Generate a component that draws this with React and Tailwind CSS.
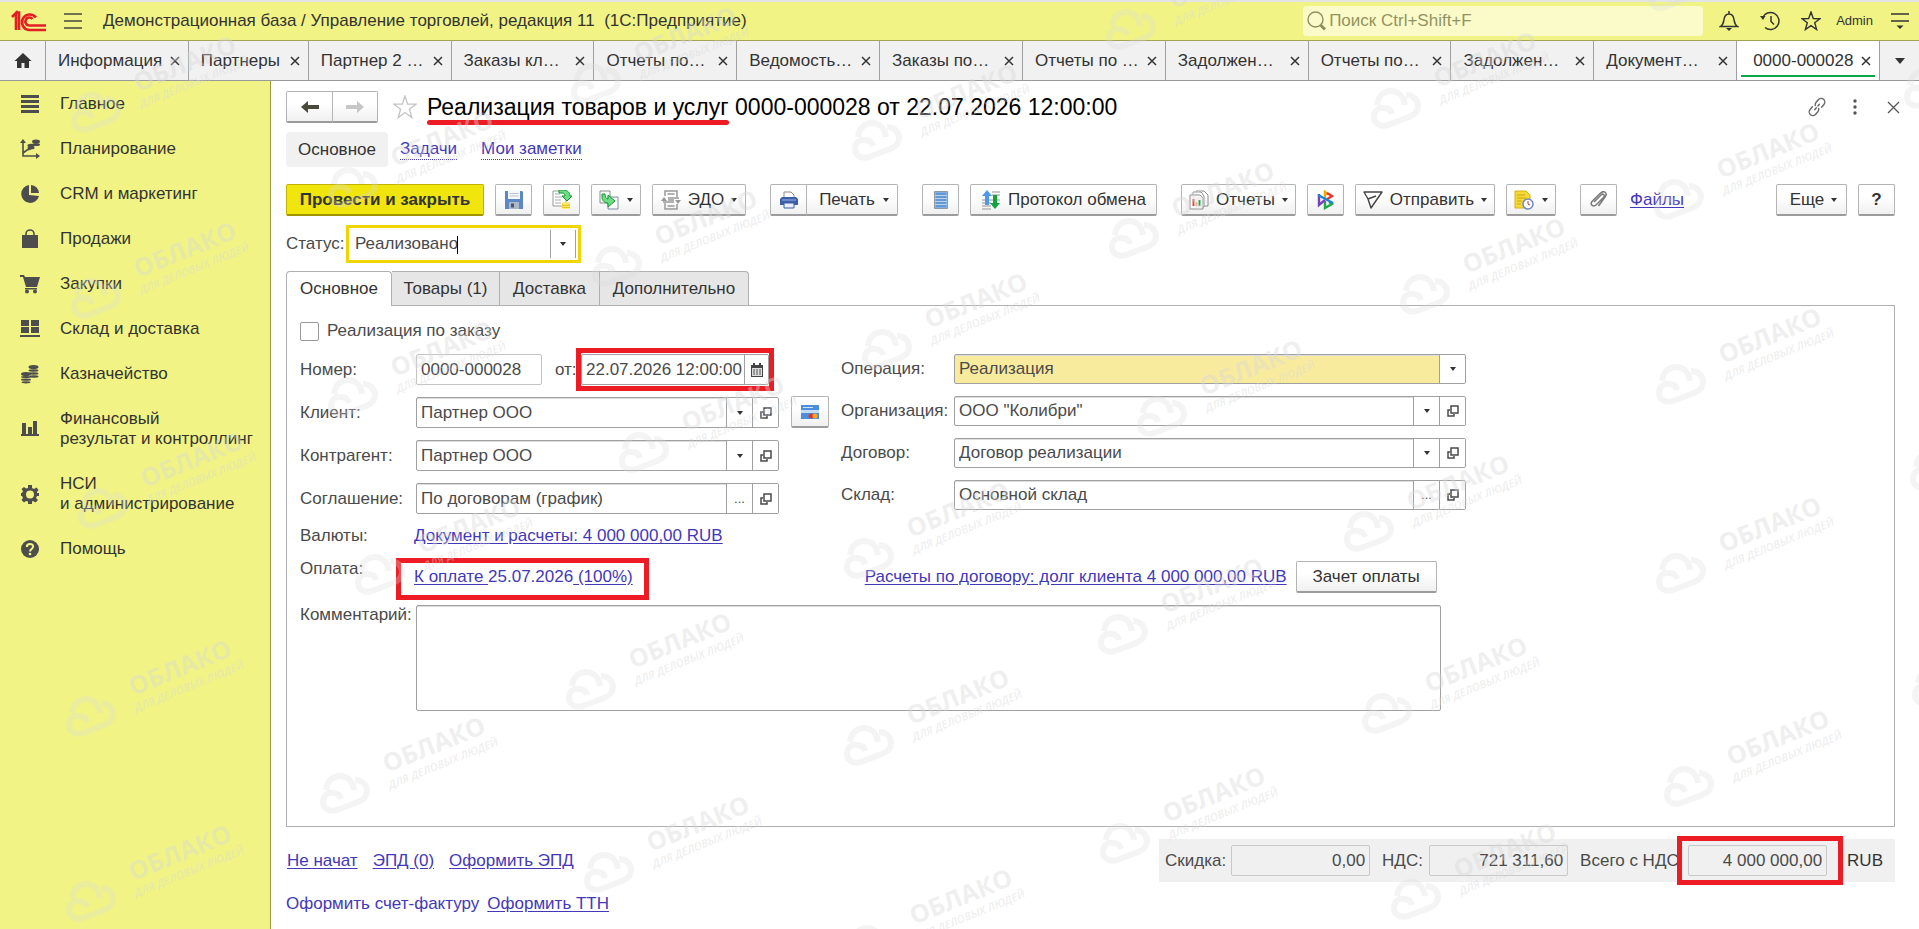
import React from 'react';
import clsx from 'clsx';

const NAV = [
  { icon: 'main', lines: ['Главное'] },
  { icon: 'plan', lines: ['Планирование'] },
  { icon: 'crm', lines: ['CRM и маркетинг'] },
  { icon: 'sales', lines: ['Продажи'] },
  { icon: 'cart', lines: ['Закупки'] },
  { icon: 'stock', lines: ['Склад и доставка'] },
  { icon: 'coins', lines: ['Казначейство'] },
  { icon: 'chart', lines: ['Финансовый', 'результат и контроллинг'] },
  { icon: 'gear', lines: ['НСИ', 'и администрирование'] },
  { icon: 'help', lines: ['Помощь'] },
];

const TABS = [
  'Информация',
  'Партнеры',
  'Партнер 2 …',
  'Заказы кл…',
  'Отчеты по…',
  'Ведомость…',
  'Заказы по…',
  'Отчеты по …',
  'Задолжен…',
  'Отчеты по…',
  'Задолжен…',
  'Документ…',
  '0000-000028',
];

// free-floating stamps over the whole window: [left, top] of each cloud
const STAMPS = [
  [71, 92], [71, 278], [78, 488], [66, 696], [66, 881],
  [328, 167], [328, 377], [355, 554], [320, 773],
  [571, 63], [592, 246], [619, 432], [566, 669], [584, 852],
  [852, 120], [862, 329], [844, 538], [844, 725], [847, 925],
  [1106, 9], [1109, 218], [1137, 396], [1098, 614], [1100, 823],
  [1371, 88], [1400, 274], [1344, 511], [1362, 693], [1391, 879],
  [1648, -30], [1654, 179], [1656, 364], [1656, 553], [1664, 766],
  [1904, 68], [1910, 450], [1912, 666],
];

function Stamps() {
  return (
    <div className="absolute inset-0 overflow-hidden pointer-events-none" aria-hidden="true">
      {STAMPS.map(([left, top]) => (
        <svg key={`${left}-${top}`} className="absolute overflow-visible" style={{ left, top }} width="52" height="44" viewBox="0 0 52 44">
          <g fill="none" stroke="#dcdcdc" strokeOpacity="0.3" strokeWidth="6">
            <path d="M6 17C7 7 14 3 20 3c8 0 13 6 14 14" />
            <path d="M35 7c7 0 12 5 12 11 0 6-4 9-9 11L17 37C10 39 3 36 3 29c0-7 5-10 10-9 4 0 7 2 8 6" />
          </g>
          <g fill="#d8d8d8" fillOpacity="0.42" fontFamily="'Open Sans', sans-serif">
            <text transform="translate(67 0) rotate(-22)" fontSize="25" fontWeight="700">ОБЛАКО</text>
            <text transform="translate(70 16) rotate(-22)" fontSize="11" fontWeight="600" fontStyle="italic">ДЛЯ ДЕЛОВЫХ ЛЮДЕЙ</text>
          </g>
        </svg>
      ))}
    </div>
  );
}

const navIcons = {
  main: <path d="M1 1h18v3H1zM1 6h18v3H1zM1 11h18v3H1zM1 16h18v3H1z" />,
  plan: (
    <>
      <path d="M3 4v13h13M3 14l4-3 3-1 3-4" fill="none" stroke="currentColor" strokeWidth="1.6" />
      <path d="M3 0l3 4H0zM20 17l-4 3v-6z" />
      <ellipse cx="16" cy="2.5" rx="4" ry="2" />
      <ellipse cx="16" cy="5.5" rx="4" ry="1.6" />
      <ellipse cx="11" cy="6.5" rx="3.6" ry="1.8" />
      <ellipse cx="11" cy="9" rx="3.6" ry="1.4" />
    </>
  ),
  crm: (
    <>
      <path d="M9 1a9 9 0 1 0 10 11l-10-1z" />
      <path d="M11 1v8h8a8.500 8.500 0 0 0-8-8z" />
    </>
  ),
  sales: (
    <>
      <path d="M2 6h16v13H2z" />
      <path d="M6 10V5a4 4 0 0 1 8 0v5" fill="none" stroke="currentColor" strokeWidth="1.600" />
    </>
  ),
  cart: (
    <>
      <path d="M0 1h4l1 2h15l-3 10H6L3 3H0z" />
      <path d="M5 14h12v1.500H5z" />
      <circle cx="7" cy="17.500" r="2" />
      <circle cx="15" cy="17.500" r="2" />
    </>
  ),
  stock: <path d="M1 1h8v6H1zM11 1h8v6h-8zM1 8h8v6H1zM11 8h8v6h-8zM0 16h20v2H0z" />,
  coins: (
    <>
      <ellipse cx="13.500" cy="3" rx="5" ry="2" />
      <ellipse cx="13.500" cy="6.500" rx="5" ry="1.200" />
      <ellipse cx="13.500" cy="9.500" rx="5" ry="1.200" />
      <ellipse cx="14" cy="12.500" rx="4.500" ry="1.200" />
      <ellipse cx="6" cy="10" rx="5" ry="2" />
      <ellipse cx="6" cy="13" rx="5" ry="1.100" />
      <ellipse cx="6" cy="15.700" rx="5" ry="1.100" />
      <ellipse cx="6" cy="18.300" rx="4.500" ry="1.100" />
    </>
  ),
  chart: <path d="M1 15h18v2H1zM2 4h4v11H2zM8 8h4v7H8zM13 2h4v13h-4z" />,
  gear: (
    <path
      fillRule="evenodd"
      d="M8 1h4v3l2 1 2.500-1.500 2 2.500L17 8v1h2v3h-2l-1 2 2 2-2.500 2.500L13 17l-1 .5V20H8v-2.500L6 17l-2 1.500L1.500 16 3 14l-1-2H1V9h1l1-2-1.500-2L4 3l2 1.500L8 4zM10 6.500a4 4 0 1 0 0 8 4 4 0 0 0 0-8z"
    />
  ),
  help: (
    <>
      <circle cx="10" cy="10" r="9" />
      <path d="M6.800 8c0-4 6.400-4 6.400-.4 0 2.400-3.200 2.200-3.200 5" fill="none" stroke="#f1f484" strokeWidth="2" />
      <circle cx="10" cy="15" r="1.300" fill="#f1f484" />
    </>
  ),
};

function Logo() {
  return (
    <svg width="36" height="22" viewBox="0 0 36 22" fill="none" stroke="#e31e24" strokeWidth="2.600">
      <path d="M1 7l4-4v17M4.500 2.500H8V20" />
      <path d="M25 7.500A7.800 7.800 0 1 0 18 20h17" />
      <path d="M21.500 9A4 4 0 1 0 18 15.500h17" />
    </svg>
  );
}

function CloseIcon() {
  return (
    <svg width="10" height="10" viewBox="0 0 10 10" fill="none" stroke="#333" strokeWidth="1.500">
      <path d="M1 1l8 8M9 1L1 9" />
    </svg>
  );
}

function Caret({ className }) {
  return (
    <svg className={className} width="6" height="4" viewBox="0 0 6 4" fill="#333">
      <path d="M0 0h6L3 4z" />
    </svg>
  );
}

function OpenIcon() {
  return (
    <svg width="12" height="12" viewBox="0 0 12 12" fill="none" stroke="#4a4a4a" strokeWidth="1.500">
      <path d="M4 1h7v7H4z" />
      <path d="M3 5H1v6h6V9" />
    </svg>
  );
}

function Header() {
  return (
    <header className="flex items-center h-[41px] border-t-2 border-b border-t-[#e4e4e4] border-b-[#a3a456] bg-[#f1f484] pl-[11px] pr-[10px] text-[#333]">
      <Logo />
      <button className="ml-[17px]" aria-label="Меню">
        <svg width="18" height="16" viewBox="0 0 18 16" stroke="#444" strokeWidth="1.500">
          <path d="M0 1h18M0 8h18M0 15h18" />
        </svg>
      </button>
      <span className="ml-[21px] whitespace-pre">Демонстрационная база / Управление торговлей, редакция 11  (1С:Предприятие)</span>
      <label className="ml-auto flex items-center w-[400px] h-[30px] rounded-sm bg-[#fafbc9] pl-1">
        <svg width="20" height="20" viewBox="0 0 20 20" fill="none" stroke="#8f8f5e" strokeWidth="1.400">
          <circle cx="8.500" cy="8.500" r="7.500" />
          <path d="M13.500 14l4.500 4.500" strokeWidth="3" />
        </svg>
        <input className="ml-[2px] flex-1 bg-transparent outline-none placeholder:text-[#93935f]" aria-label="Поиск" placeholder="Поиск Ctrl+Shift+F" />
      </label>
      <button className="ml-4" aria-label="Уведомления">
        <svg width="20" height="20" viewBox="0 0 20 20" fill="none" stroke="#333" strokeWidth="1.500">
          <path d="M1.500 15.500c3-2 3-4 3.500-7C5.500 5 7 3 10 3s4.500 2 5 5.500c.5 3 .5 5 3.500 7zM10 0v3" />
          <path d="M7 17h6l-3 3z" fill="#333" stroke="none" />
        </svg>
      </button>
      <button className="ml-[21px]" aria-label="История">
        <svg width="20" height="20" viewBox="0 0 20 20" fill="none" stroke="#333" strokeWidth="1.500">
          <path d="M2.500 7A8.500 8.500 0 1 1 5 16.500M11 5v5.500l3 3" />
          <path d="M0 5l5.500 0-2.500 4z" fill="#333" stroke="none" />
        </svg>
      </button>
      <button className="ml-[21px]" aria-label="Избранное">
        <svg width="20" height="20" viewBox="0 0 20 20" fill="none" stroke="#333" strokeWidth="1.400">
          <path d="M10 1l2.300 6.500 6.700.2-5.300 4.100 1.900 6.700L10 14.600l-5.600 3.900 1.900-6.700L1 7.700l6.700-.2z" />
        </svg>
      </button>
      <button className="ml-[15px] text-[13px]">Admin</button>
      <button className="ml-[18px]" aria-label="Настройки">
        <svg width="18" height="18" viewBox="0 0 18 18" stroke="#333" strokeWidth="1.500">
          <path d="M0 2h18M0 9h18" />
          <path d="M5.500 13.500h7L9 17z" fill="#333" stroke="none" />
        </svg>
      </button>
    </header>
  );
}

function TabBar() {
  return (
    <nav className="flex h-10 border-b border-[#999] bg-[#f1f1f1] text-[#333]">
      <button className="flex w-[45px] shrink-0 items-center justify-center" aria-label="Начальная страница">
        <svg width="18" height="17" viewBox="0 0 18 17" fill="#333">
          <path d="M9 1l8.500 8H15v7h-4.500v-5h-3v5H3V9H.5z" />
        </svg>
      </button>
      {TABS.map((tab, i) => {
        const active = i === TABS.length - 1;
        return (
          <div
            key={i}
            className={clsx(
              'relative flex items-center justify-between border-l border-[#a0a0a0] pr-2 min-w-0',
              i === 1 ? 'flex-[1_1_120px]' : 'flex-[1_1_143px]',
              active ? 'bg-white pl-4' : 'pl-3',
            )}
          >
            <button className="whitespace-nowrap">{tab}</button>
            <button aria-label="Закрыть"><CloseIcon /></button>
            {active && <span className="absolute bottom-[3px] left-1 right-1 h-[2px] bg-[#0ca64a]" />}
          </div>
        );
      })}
      <button className="flex w-10 shrink-0 items-center justify-center border-l border-[#a0a0a0]" aria-label="Все вкладки">
        <svg width="10" height="6" viewBox="0 0 10 6" fill="#333"><path d="M0 0h10L5 6z" /></svg>
      </button>
    </nav>
  );
}

function Sidebar() {
  return (
    <aside className="w-[271px] shrink-0 border-r border-[#9a9b45] bg-[#f1f484] text-[#333]">
      {NAV.map((item) => (
        <a key={item.icon} href="#" className={clsx('flex items-center pl-5 leading-5', item.lines.length > 1 ? 'h-[65px]' : 'h-[45px]')}>
          <svg className="text-[#4d4d4d]" width="20" height="20" viewBox="0 0 20 20" fill="currentColor">{navIcons[item.icon]}</svg>
          <span className="ml-5">
            {item.lines.map((line) => (
              <span key={line} className="block whitespace-nowrap">{line}</span>
            ))}
          </span>
        </a>
      ))}
    </aside>
  );
}

const BTN = 'flex items-center justify-center h-8 shrink-0 whitespace-nowrap rounded-xs border border-[#b4b4b4] border-b-2 border-b-[#9c9c9c] bg-linear-to-b from-white from-40% to-[#f0f0f0] text-[#333]';

function Toolbar() {
  return (
    <div className="mt-[17px] flex">
      <button className="h-8 w-[198px] shrink-0 whitespace-nowrap rounded-xs border border-[#c0b400] border-b-2 border-b-[#a09700] bg-[#f0e50c] font-bold text-[#333]">Провести и закрыть</button>
      <button className={clsx(BTN, 'ml-[11px] w-[37px]')} aria-label="Записать">
        <svg width="18" height="18" viewBox="0 0 18 18">
          <path d="M0 0h17l1 1v17H0z" fill="#5d87c4" />
          <path d="M3 0h12v8H3z" fill="#f4f8fd" />
          <path d="M4.500 2h9v1h-9zM4.500 4.500h9v1h-9z" fill="#b7c4d8" />
          <path d="M4 11h10v7H4z" fill="#aeb7c4" />
          <path d="M6 12.500h3v4H6z" fill="#46587a" />
        </svg>
      </button>
      <button className={clsx(BTN, 'ml-[11px] w-[37px]')} aria-label="Провести">
        <svg width="20" height="20" viewBox="0 0 20 20">
          <path d="M1 1h13v15H1z" fill="#fff" stroke="#999" />
          <path d="M3 4h5M3 7h7M3 10h6M3 13h6" stroke="#aaa" />
          <path d="M7 0h4c5 0 7 3 7 6h2l-5 5-5-5h3c0-2-1-3-3-3H7z" fill="#6fdc83" stroke="#0f9a34" />
          <path d="M10 13h8v6h-8z" fill="#e9c21e" />
          <ellipse cx="14" cy="13.500" rx="4" ry="1.500" fill="#ffe766" />
          <path d="M10 16.500h8M10 18.500h8" stroke="#fff06e" />
        </svg>
      </button>
      <button className={clsx(BTN, 'ml-[11px] w-[50px]')} aria-label="Создать на основании">
        <svg width="20" height="20" viewBox="0 0 20 20">
          <path d="M1 1h10v12H1z" fill="#fff" stroke="#8a8a8a" />
          <path d="M9 7h10v12H9z" fill="#fff" stroke="#7d8ba0" />
          <path d="M3 4v3c0 4 3 6 6 6v4l7-6-7-6v4C7 9 6 7 6 4z" fill="#6fdc83" stroke="#0f9a34" />
        </svg>
        <Caret className="ml-2" />
      </button>
      <button className={clsx(BTN, 'ml-[11px] w-[94px]')}>
        <svg width="20" height="20" viewBox="0 0 20 20" fill="none" stroke="#999" strokeWidth="1.500">
          <path d="M4 6V1h12v6M4 13v6h12v-5M6.500 4h7M6.500 16h7M7 8h11M2 12h11" />
          <path d="M7 10h6" />
          <path d="M0 11l3-4 3 4zM14 10h6l-3 4z" fill="#999" stroke="none" />
        </svg>
        <span className="ml-[7px]">ЭДО</span>
        <Caret className="ml-[7px]" />
      </button>
      <div className="ml-6 flex">
        <button className={clsx(BTN, 'w-[37px] rounded-r-none')} aria-label="Печать">
          <svg width="18" height="18" viewBox="0 0 18 18">
            <path d="M4 7V1h7l3 3v3z" fill="#fff" stroke="#8a8a8a" />
            <path d="M2 6h14l2 2v6H0V8z" fill="#3d5fa8" />
            <path d="M2 9h14" stroke="#9db8e8" />
            <path d="M4 12h10v5H4z" fill="#e8eefa" stroke="#3d5fa8" />
          </svg>
        </button>
        <button className={clsx(BTN, '-ml-px w-[92px] rounded-l-none pl-1')}>
          Печать
          <Caret className="ml-2" />
        </button>
      </div>
      <button className={clsx(BTN, 'ml-6 w-[37px]')} aria-label="Движения документа">
        <svg width="14" height="18" viewBox="0 0 14 18">
          <path d="M.5.5h13v17H.5z" fill="#7fb0e6" stroke="#8e99a6" />
          <path d="M2 3h10M2 6h10M2 9h10M2 12h10M2 15h10" stroke="#4a80bf" />
          <path d="M1 4.500h12M1 7.500h12M1 10.500h12M1 13.500h12" stroke="#b9d4f0" />
        </svg>
      </button>
      <button className={clsx(BTN, 'ml-[11px] w-[187px]')}>
        <svg width="20" height="20" viewBox="0 0 20 20">
          <path d="M1 13h9M1 16h9M1 19h9M11 2h8M11 5h8M1 10h18" stroke="#b5b5b5" strokeWidth="1.300" />
          <path d="M6 0l5 6H8v9H4V6H1z" fill="#4d9be8" />
          <path d="M12 5h4v8h3l-5 6-5-6h3z" fill="#0fa53c" />
        </svg>
        <span className="ml-[7px]">Протокол обмена</span>
      </button>
      <button className={clsx(BTN, 'ml-6 w-[115px]')}>
        <svg width="20" height="20" viewBox="0 0 20 20" fill="#fff" stroke="#8a8a8a">
          <path d="M7 1h8l4 4v11H7z" />
          <path d="M4 2h8l3 4v11H4z" />
          <path d="M1 5h10l3 3v11H1z" />
          <path d="M4.500 16V9" stroke="#e0452c" strokeWidth="2" />
          <path d="M7.500 16v-4" stroke="#f3a37b" strokeWidth="2" />
          <path d="M10.500 16v-6" stroke="#1fa84a" strokeWidth="2" />
        </svg>
        <span className="ml-[7px]">Отчеты</span>
        <Caret className="ml-[7px]" />
      </button>
      <button className={clsx(BTN, 'ml-[11px] w-[37px]')} aria-label="Досье">
        <svg width="18" height="20" viewBox="0 0 18 20" fill="none" strokeWidth="2.400">
          <path d="M8 9V2l3 2.500" stroke="#f5a800" />
          <path d="M10 3l5 3-6 4" stroke="#e8352b" />
          <path d="M8 11v7l7-4-3-2" stroke="#1fa84a" />
          <path d="M2 4v11l6-5" stroke="#7b3fb8" />
          <path d="M1 5l15 8" stroke="#1b86d8" />
        </svg>
      </button>
      <button className={clsx(BTN, 'ml-[11px] w-[140px]')}>
        <svg width="20" height="18" viewBox="0 0 20 18" fill="none" stroke="#444" strokeWidth="1.400">
          <path d="M1 1h18L8 17 5 8zM5 8l8-3M5 8L1 1" strokeLinejoin="round" />
        </svg>
        <span className="ml-[7px]">Отправить</span>
        <Caret className="ml-[7px]" />
      </button>
      <button className={clsx(BTN, 'ml-[11px] w-[50px]')} aria-label="Напоминание">
        <svg width="20" height="20" viewBox="0 0 20 20">
          <path d="M1 1h11l4 4v13H1z" fill="#f5d935" stroke="#d2b21a" />
          <path d="M3 5h8M3 8h9M3 11h5M3 14h4" stroke="#c9a91a" />
          <circle cx="14" cy="14" r="5" fill="#fff" stroke="#6f86c9" strokeWidth="1.500" />
          <path d="M14 11v3l2 1" stroke="#d0342c" fill="none" />
        </svg>
        <Caret className="ml-2" />
      </button>
      <button className={clsx(BTN, 'ml-6 w-[37px]')} aria-label="Присоединенные файлы">
        <svg width="18" height="18" viewBox="0 0 18 18" fill="none" stroke="#7a7a7a" strokeWidth="1.500">
          <path d="M4 11l7-7c2-2 4.500 0 2.500 2.500l-7 7c-3 3-7 .5-4.500-3l8-8c4-4 8-.5 5 3.500L8.500 15" />
        </svg>
      </button>
      <a href="#" className="ml-[13px] self-center text-[#4338b8] underline underline-offset-2">Файлы</a>
      <button className={clsx(BTN, 'ml-auto w-[71px] pl-1')}>
        Еще
        <Caret className="ml-[7px]" />
      </button>
      <button className={clsx(BTN, 'ml-[11px] w-[37px] font-bold')}>?</button>
    </div>
  );
}

const CELL = 'flex w-[26px] shrink-0 items-center justify-center border-l border-[#a0a0a0] bg-white';

// one form line: caption, value and the picker buttons at the right end
function Field({ id, label, value, labelClass, boxClass, picker = 'list', open = true }) {
  return (
    <div className="flex min-w-0 items-center">
      <label htmlFor={id} className={clsx('shrink-0', labelClass)}>{label}</label>
      <div className={clsx('flex min-w-0 flex-1 overflow-hidden rounded-xs border border-[#a0a0a0] shadow-[inset_0_1px_0_#ddd]', boxClass)}>
        {picker === 'list' ? (
          <select id={id} className="min-w-0 flex-1 appearance-none bg-transparent pl-1 outline-none">
            <option>{value}</option>
          </select>
        ) : (
          <input id={id} className="min-w-0 flex-1 bg-transparent pl-1 outline-none" defaultValue={value} />
        )}
        <button className={CELL} aria-label="Выбрать">{picker === 'list' ? <Caret /> : <span className="text-[13px]">...</span>}</button>
        {open && <button className={CELL} aria-label="Открыть"><OpenIcon /></button>}
      </div>
    </div>
  );
}

const LINK = 'text-[#4338b8] underline underline-offset-2 whitespace-nowrap';

function MainForm() {
  return (
    <section className="flex-1 border border-[#b0b0b0] px-[13px] pt-[15px]">
      <label className="flex h-5 w-fit items-center">
        <input type="checkbox" className="size-[19px] appearance-none rounded-xs border border-[#999] bg-white" />
        <span className="ml-2">Реализация по заказу</span>
      </label>

      <div className="mt-[13px] flex">
        <div className="flex w-[479px] shrink-0 flex-col gap-3">
          <div className="flex items-center">
            <label htmlFor="number" className="w-[116px] shrink-0">Номер:</label>
            <input id="number" className="h-[31px] w-[126px] rounded-xs border border-[#c4c4c4] pl-1 outline-none" defaultValue="0000-000028" />
            <label htmlFor="date" className="ml-[13px] w-[26px]">от:</label>
            <div className="relative flex h-[31px] w-[188px] rounded-xs border border-[#a0a0a0]">
              <input id="date" className="min-w-0 flex-1 pl-1 outline-none" defaultValue="22.07.2026 12:00:00" />
              <button className="flex w-[24px] items-center justify-center border-l border-[#a0a0a0]" aria-label="Календарь">
                <svg width="12" height="14" viewBox="0 0 12 14" fill="#444">
                  <path d="M0 2h12v12H0z" />
                  <path d="M2 0h2v3H2zM8 0h2v3H8z" />
                  <path d="M1 5h10v8H1z" fill="#ddd" />
                  <path d="M2 7h8M2 9h8M2 11h8" stroke="#555" strokeDasharray="2 1" />
                </svg>
              </button>
              <span className="pointer-events-none absolute -inset-x-[6px] -inset-y-[7px] border-5 border-[#ed1c24]" />
            </div>
          </div>
          <Field id="client" label="Клиент:" value="Партнер ООО" labelClass="w-[116px]" boxClass="h-[31px]" />
          <Field id="contractor" label="Контрагент:" value="Партнер ООО" labelClass="w-[116px]" boxClass="h-[31px]" />
          <Field id="agreement" label="Соглашение:" value="По договорам (график)" labelClass="w-[116px]" boxClass="h-[31px]" picker="dots" />
        </div>

        <button className={clsx(BTN, 'ml-3 mt-[42px] w-[38px]')} aria-label="Оплата картой">
          <svg width="18" height="14" viewBox="0 0 18 14">
            <path d="M0 0h18v14H0z" fill="#4b8fdc" />
            <path d="M0 5h18v3H0z" fill="#c4dcf4" />
            <path d="M2 2h10v1H2z" fill="#cfe2f7" />
            <circle cx="10" cy="11" r="2.500" fill="#e0342b" />
            <circle cx="14" cy="11" r="2.500" fill="#f5a623" />
          </svg>
        </button>

        <div className="ml-3 flex w-[625px] min-w-0 flex-col gap-3">
          <Field id="operation" label="Операция:" value="Реализация" labelClass="w-[113px]" boxClass="h-[30px] bg-[#f9eb9e]" open={false} />
          <Field id="company" label="Организация:" value={'ООО "Колибри"'} labelClass="w-[113px]" boxClass="h-[30px]" />
          <Field id="contract" label="Договор:" value="Договор реализации" labelClass="w-[113px]" boxClass="h-[30px]" />
          <Field id="warehouse" label="Склад:" value="Основной склад" labelClass="w-[113px]" boxClass="h-[30px]" picker="dots" />
        </div>
      </div>

      <div className="mt-3 flex h-5 items-center">
        <span className="w-[114px]">Валюты:</span>
        <a href="#" className={LINK}>Документ и расчеты: 4 000 000,00 RUB</a>
      </div>

      <div className="mt-[11px] flex h-10 items-center">
        <span className="w-[114px] self-start leading-6">Оплата:</span>
        <a href="#" className="relative whitespace-nowrap text-[#4338b8] underline-offset-2">
          <span className="underline whitespace-pre">К оплате </span>25.07.2026<span className="underline whitespace-pre"> (100%)</span>
          <span className="pointer-events-none absolute -bottom-[13px] -left-[18px] -right-[16px] -top-[9px] border-5 border-[#ed1c24]" />
        </a>
        <a href="#" className={clsx(LINK, 'ml-[232px]')}>Расчеты по договору: долг клиента 4 000 000,00 RUB</a>
        <button className={clsx(BTN, 'ml-[9px] w-[141px]')}>Зачет оплаты</button>
      </div>

      <div className="mt-2 flex items-start">
        <label htmlFor="comment" className="w-[116px] shrink-0 leading-5">Комментарий:</label>
        <textarea id="comment" className="h-[106px] w-[1025px] min-w-0 resize-none rounded-xs border border-[#a0a0a0] shadow-[inset_0_1px_0_#ddd] outline-none" />
      </div>
    </section>
  );
}

const TOTAL = 'h-[31px] w-[139px] rounded-xs border border-[#c8c8c8] bg-transparent pr-1 text-right outline-none';

function Totals() {
  return (
    <div className="ml-auto flex h-[43px] items-center bg-[#f0f0f0] pl-[6px] pr-3">
      <label htmlFor="discount" className="w-[66px]">Скидка:</label>
      <input id="discount" className={TOTAL} readOnly value="0,00" />
      <label htmlFor="vat" className="ml-3 w-[47px]">НДС:</label>
      <input id="vat" className={TOTAL} readOnly value="721 311,60" />
      <label htmlFor="total" className="ml-3 w-[108px] whitespace-nowrap">Всего с НДС</label>
      <span className="relative flex">
        <input id="total" className={TOTAL} readOnly value="4 000 000,00" />
        <span className="pointer-events-none absolute -left-[11px] -right-4 -inset-y-[9px] border-5 border-[#ed1c24]" />
      </span>
      <span className="ml-5 text-[#333]">RUB</span>
    </div>
  );
}

export default function App() {
  return (
    <div className="relative flex min-h-screen flex-col overflow-hidden bg-white font-['Liberation_Sans',Arial,sans-serif] text-[17px] leading-5 text-[#4a4a4a]">
      <Header />
      <TabBar />
      <div className="flex flex-1">
        <Sidebar />
        <main className="flex min-w-0 flex-1 flex-col pl-[15px] pr-6 pt-[10px]">
          <div className="flex items-center">
            <button className={clsx(BTN, 'w-[47px] rounded-r-none')} aria-label="Назад">
              <svg width="18" height="14" viewBox="0 0 18 14" fill="#4a4a3c"><path d="M0 7l7-6v4h11v4H7v4z" /></svg>
            </button>
            <button className={clsx(BTN, '-ml-px w-[46px] rounded-l-none')} aria-label="Вперед">
              <svg width="18" height="14" viewBox="0 0 18 14" fill="#c6c6c6"><path d="M18 7l-7-6v4H0v4h11v4z" /></svg>
            </button>
            <button className="ml-[15px]" aria-label="В избранное">
              <svg width="24" height="24" viewBox="0 0 24 24" fill="none" stroke="#c4c4c4" strokeWidth="1.300">
                <path d="M12 1l2.600 8.200H23l-6.600 5 2.400 8.400L12 17.500l-6.800 5.100 2.400-8.400L1 9.200h8.400z" />
              </svg>
            </button>
            <h1 className="ml-[10px] whitespace-nowrap text-[23px] leading-7 text-black">
              <span className="relative">
                Реализация товаров и услуг
                <span className="absolute -bottom-[5px] left-0 right-0 h-[5px] rounded-sm bg-[#ed1c24]" />
              </span>{' '}
              0000-000028 от 22.07.2026 12:00:00
            </h1>
            <button className="ml-auto" aria-label="Получить ссылку">
              <svg width="22" height="22" viewBox="0 0 24 24" fill="none" stroke="#666" strokeWidth="1.500" strokeLinecap="round">
                <g transform="rotate(-50 12 12)">
                  <path d="M9 8H5a4 4 0 0 0 0 8h4a4 4 0 0 0 3-1.500" />
                  <path d="M15 16h4a4 4 0 0 0 0-8h-4a4 4 0 0 0-3 1.500" />
                  <path d="M8 12h8" strokeDasharray="3 2.500" />
                </g>
              </svg>
            </button>
            <button className="ml-[25px]" aria-label="Еще">
              <svg width="4" height="16" viewBox="0 0 4 16" fill="#555">
                <circle cx="2" cy="2" r="1.700" /><circle cx="2" cy="8" r="1.700" /><circle cx="2" cy="14" r="1.700" />
              </svg>
            </button>
            <button className="ml-[30px] -mr-[5px]" aria-label="Закрыть">
              <svg width="13" height="13" viewBox="0 0 13 13" fill="none" stroke="#555" strokeWidth="1.300"><path d="M1 1l11 11M12 1L1 12" /></svg>
            </button>
          </div>

          <nav className="mt-[9px] flex h-[35px] items-center">
            <span className="flex h-full w-[102px] items-center justify-center rounded-sm bg-[#f1f1f1] text-[#333]">Основное</span>
            <a href="#" className="ml-3 border-b border-dotted border-[#4338b8] text-[#4338b8]">Задачи</a>
            <a href="#" className="ml-6 border-b border-dotted border-[#4338b8] text-[#4338b8]">Мои заметки</a>
          </nav>

          <Toolbar />

          <div className="mt-[9px] flex h-[38px] items-center">
            <label htmlFor="status" className="w-[60px]">Статус:</label>
            <div className="relative flex h-full w-[235px] items-stretch border-3 border-[#f0d500] py-[2px] pr-[2px]">
              <input id="status" className="min-w-0 flex-1 pl-[6px] outline-none" defaultValue="Реализовано" />
              <span className="absolute left-[108px] top-2 h-[18px] w-px bg-black" />
              <button className="flex w-[26px] items-center justify-center border-x border-[#a0a0a0]" aria-label="Выбрать"><Caret /></button>
            </div>
          </div>

          <div className="mt-2 flex h-[34px] shrink-0 text-[#333]" role="tablist">
            <button role="tab" aria-selected="true" className="relative z-10 -mb-px w-[106px] rounded-t-sm border border-b-0 border-[#b0b0b0] bg-white">Основное</button>
            <button role="tab" className="w-[108px] border border-b-0 border-l-0 border-[#b0b0b0] bg-[#e6e6e6]">Товары (1)</button>
            <button role="tab" className="w-[100px] border border-b-0 border-l-0 border-[#b0b0b0] bg-[#e6e6e6]">Доставка</button>
            <button role="tab" className="w-[149px] rounded-tr-sm border border-b-0 border-l-0 border-[#b0b0b0] bg-[#e6e6e6]">Дополнительно</button>
          </div>
          <MainForm />

          <footer className="pb-[15px] pt-3">
            <div className="flex items-center pl-px">
              <a href="#" className={LINK}>Не начат</a>
              <a href="#" className={clsx(LINK, 'ml-[15px]')}>ЭПД (0)</a>
              <a href="#" className={clsx(LINK, 'ml-[15px]')}>Оформить ЭПД</a>
              <Totals />
            </div>
            <div className="mt-3 flex">
              <a href="#" className="whitespace-nowrap text-[#4338b8]">Оформить счет-фактуру</a>
              <a href="#" className={clsx(LINK, 'ml-2')}>Оформить ТТН</a>
            </div>
          </footer>
        </main>
      </div>
      <Stamps />
    </div>
  );
}
